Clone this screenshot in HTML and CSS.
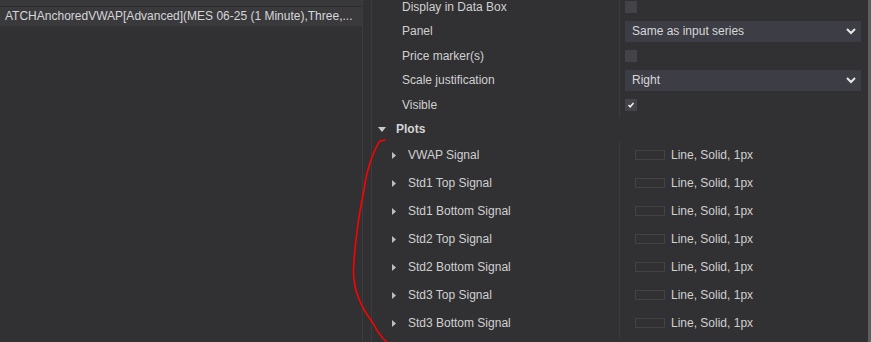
FILE: index.html
```html
<!DOCTYPE html>
<html>
<head>
<meta charset="utf-8">
<link rel="stylesheet" href="styles.css">
</head>
<body>
<div class="app">
  <aside class="list">
    <div class="list-top"></div>
    <div class="list-row">ATCHAnchoredVWAP[Advanced](MES 06-25 (1 Minute),Three,...</div>
  </aside>
  <div class="gutter"></div>
  <main class="grid">
    <div class="rows">
      <div class="prop">
        <div class="label">Display in Data Box</div>
        <div class="value"><span class="check"></span></div>
      </div>
      <div class="prop">
        <div class="label">Panel</div>
        <div class="value"><div class="select"><span>Same as input series</span><svg class="chev" width="10" height="7" viewBox="0 0 10 7"><polyline points="1,1 5,5 9,1" fill="none" stroke="#e6e6e6" stroke-width="2"/></svg></div></div>
      </div>
      <div class="prop">
        <div class="label">Price marker(s)</div>
        <div class="value"><span class="check"></span></div>
      </div>
      <div class="prop">
        <div class="label">Scale justification</div>
        <div class="value"><div class="select"><span>Right</span><svg class="chev" width="10" height="7" viewBox="0 0 10 7"><polyline points="1,1 5,5 9,1" fill="none" stroke="#e6e6e6" stroke-width="2"/></svg></div></div>
      </div>
      <div class="prop">
        <div class="label">Visible</div>
        <div class="value"><span class="check"><svg width="12" height="12" viewBox="0 0 12 12"><polyline points="3.5,6 5.2,7.8 8.5,4" fill="none" stroke="#f2f2f2" stroke-width="1.5"/></svg></span></div>
      </div>
      <div class="category">
        <svg class="tri-down" width="8" height="5" viewBox="0 0 8 5"><polygon points="0,0 8,0 4,5" fill="#c9c9c9"/></svg>
        <span>Plots</span>
      </div>
      <div class="plot">
        <div class="label"><svg class="tri-right" width="4" height="7" viewBox="0 0 4 7"><polygon points="0,0 4,3.5 0,7" fill="#bdbdbd"/></svg><span>VWAP Signal</span></div>
        <div class="value"><span class="swatch"></span><span>Line, Solid, 1px</span></div>
      </div>
      <div class="plot">
        <div class="label"><svg class="tri-right" width="4" height="7" viewBox="0 0 4 7"><polygon points="0,0 4,3.5 0,7" fill="#bdbdbd"/></svg><span>Std1 Top Signal</span></div>
        <div class="value"><span class="swatch"></span><span>Line, Solid, 1px</span></div>
      </div>
      <div class="plot">
        <div class="label"><svg class="tri-right" width="4" height="7" viewBox="0 0 4 7"><polygon points="0,0 4,3.5 0,7" fill="#bdbdbd"/></svg><span>Std1 Bottom Signal</span></div>
        <div class="value"><span class="swatch"></span><span>Line, Solid, 1px</span></div>
      </div>
      <div class="plot">
        <div class="label"><svg class="tri-right" width="4" height="7" viewBox="0 0 4 7"><polygon points="0,0 4,3.5 0,7" fill="#bdbdbd"/></svg><span>Std2 Top Signal</span></div>
        <div class="value"><span class="swatch"></span><span>Line, Solid, 1px</span></div>
      </div>
      <div class="plot">
        <div class="label"><svg class="tri-right" width="4" height="7" viewBox="0 0 4 7"><polygon points="0,0 4,3.5 0,7" fill="#bdbdbd"/></svg><span>Std2 Bottom Signal</span></div>
        <div class="value"><span class="swatch"></span><span>Line, Solid, 1px</span></div>
      </div>
      <div class="plot">
        <div class="label"><svg class="tri-right" width="4" height="7" viewBox="0 0 4 7"><polygon points="0,0 4,3.5 0,7" fill="#bdbdbd"/></svg><span>Std3 Top Signal</span></div>
        <div class="value"><span class="swatch"></span><span>Line, Solid, 1px</span></div>
      </div>
      <div class="plot">
        <div class="label"><svg class="tri-right" width="4" height="7" viewBox="0 0 4 7"><polygon points="0,0 4,3.5 0,7" fill="#bdbdbd"/></svg><span>Std3 Bottom Signal</span></div>
        <div class="value"><span class="swatch"></span><span>Line, Solid, 1px</span></div>
      </div>
    </div>
  </main>
  <div class="scrollbar"></div>
  <svg class="annot" width="871" height="342" viewBox="0 0 871 342">
    <path d="M385,140 L380,141 C377,144 374,152 371,160 C368,168 366,176 364,190 C361,205 359,215 357.5,228 C355.5,242 354,258 353.5,270 C353.5,280 355,290 359,299 C362,307 367,315 373,323 C376,329 379,335 386.5,342" fill="none" stroke="#ff0000" stroke-width="1.6" stroke-linecap="round"/>
  </svg>
</div>
</body>
</html>
```

FILE: styles.css
```css
html, body {
  margin: 0;
  padding: 0;
  background: #313133;
}

.app {
  position: relative;
  width: 871px;
  height: 342px;
  display: flex;
  overflow: hidden;
  font-family: "Liberation Sans", Arial, sans-serif;
  font-size: 12px;
  color: #d0d0d0;
}

.list {
  width: 362px;
  flex: none;
  border-right: 1px solid #3c3c3f;
  display: flex;
  flex-direction: column;
}

.list-top {
  height: 6px;
  background: #38383a;
  border-bottom: 1px solid #2c2c2e;
}

.list-row {
  height: 19px;
  line-height: 19px;
  padding-left: 5px;
  background: #3a3a3d;
  border-bottom: 1px solid #343436;
  white-space: nowrap;
  overflow: hidden;
  color: #d6d6d8;
}

.gutter {
  width: 8px;
  flex: none;
}

.grid {
  width: 496px;
  flex: none;
  border-left: 1px solid #3c3c3f;
  overflow: hidden;
}

.rows {
  margin-top: -5.5px;
  display: flex;
  flex-direction: column;
}

.prop {
  height: 24.5px;
  display: flex;
}

.prop .label,
.plot .label {
  width: 247px;
  flex: none;
  display: flex;
  align-items: center;
  white-space: nowrap;
}

.prop .label {
  padding-left: 30px;
  box-sizing: border-box;
}

.value {
  flex: 1;
  border-left: 1px solid #3c3c3f;
  display: flex;
  align-items: center;
  padding-left: 5px;
  padding-right: 7px;
}

.check {
  width: 12px;
  height: 12px;
  background: #434349;
  display: flex;
}

.select {
  flex: 1;
  height: 21px;
  background: #3d3d45;
  display: flex;
  align-items: center;
  justify-content: space-between;
  padding: 0 5px 0 7px;
  color: #d8d8da;
}

.chev {
  display: block;
}

.category {
  height: 24.5px;
  display: flex;
  align-items: center;
  padding-left: 6px;
  gap: 10px;
  font-weight: bold;
  color: #d4d4d6;
}

.category .tri-down {
  display: block;
}

.plot {
  height: 28px;
  display: flex;
}

.plot .label,
.plot .value {
  padding-bottom: 1px;
  box-sizing: border-box;
}

.plot .label {
  padding-left: 20px;
  gap: 12px;
}

.tri-right {
  display: block;
}

.swatch {
  width: 28px;
  height: 8px;
  border: 1px solid #434345;
  margin-left: 10px;
  margin-right: 6px;
}

.scrollbar {
  width: 3px;
  flex: none;
  background: #5e5e60;
}

.annot {
  position: absolute;
  left: 0;
  top: 0;
  pointer-events: none;
}
```
